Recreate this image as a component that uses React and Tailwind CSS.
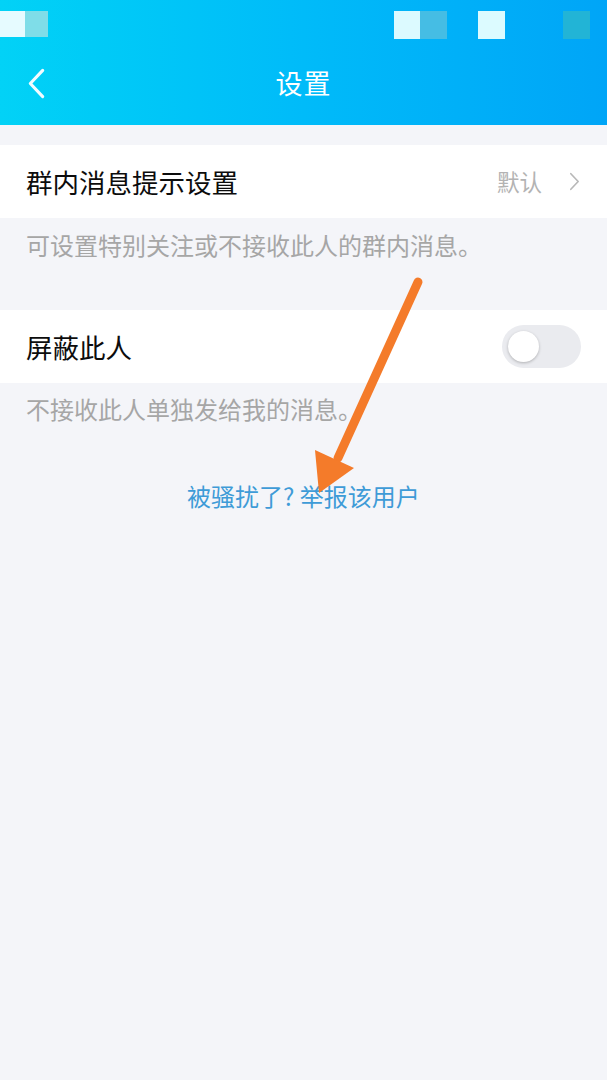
import React from 'react';

const cjk = { fontFamily: '"Noto Sans CJK SC", "Noto Sans", sans-serif' };

function Chevron({ className, stroke = '#fff', width = 2.5 }) {
  return (
    <svg viewBox="0 0 12 20" className={className} fill="none">
      <path d="M10 1.5 L2 10 L10 18.5" stroke={stroke} strokeWidth={width} strokeLinecap="round" strokeLinejoin="round" />
    </svg>
  );
}

// orange annotation arrow drawn over the page
function Arrow() {
  return (
    <svg className="absolute left-0 top-0 pointer-events-none" width="607" height="1080" viewBox="0 0 607 1080">
      <line x1="418" y1="282" x2="338" y2="458" stroke="#f47b2a" strokeWidth="9" strokeLinecap="round" />
      <polygon points="315,450 354,468 319,493" fill="#f47b2a" />
    </svg>
  );
}

export default function App() {
  return (
    <div className="relative w-[607px] h-[1080px] bg-[#f4f5f9] overflow-hidden" style={cjk}>
      {/* header */}
      <div className="h-[125px] bg-gradient-to-r from-[#02d2f6] via-[#00bbf9] to-[#00a5f7] flex flex-col">
        <div className="h-[50px] flex items-start pt-[11px]">
          <div className="w-[25px] h-[26px] bg-[#e6fbff]" />
          <div className="w-[23px] h-[26px] bg-[#7fdde8]" />
          <div className="flex-1" />
          <div className="w-[26px] h-[28px] bg-[#dcfaff]" />
          <div className="w-[27px] h-[28px] bg-[#45bde4]" />
          <div className="w-[31px]" />
          <div className="w-[27px] h-[28px] bg-[#dcfbff]" />
          <div className="w-[58px]" />
          <div className="w-[27px] h-[28px] bg-[#22b4d6]" />
          <div className="w-[17px]" />
        </div>
        <div className="flex-1 relative flex items-center justify-center pb-[8px]">
          <Chevron className="absolute left-[27px] top-[18px] w-[19px] h-[31px]" stroke="#f3fbff" width={2} />
          <span className="text-white text-[27px] tracking-[1px]">设置</span>
        </div>
      </div>

      <div className="h-[20px]" />

      <div className="h-[73px] bg-white flex items-center pl-[26px] pr-[27px]">
        <span className="text-[26.5px] text-[#0c0c0c]">群内消息提示设置</span>
        <span className="ml-auto text-[22.5px] text-[#b3b3b3]">默认</span>
        <Chevron className="ml-[27px] w-[11px] h-[19px] rotate-180" stroke="#b8b8b8" width={1.8} />
      </div>
      <div className="h-[92px] pl-[26px] pt-[9px] text-[24px] text-[#a6a6a6]">可设置特别关注或不接收此人的群内消息。</div>

      <div className="h-[73px] bg-white flex items-center pl-[26px] pr-[26px]">
        <span className="text-[26.5px] text-[#0c0c0c]">屏蔽此人</span>
        <div className="ml-auto w-[79px] h-[43px] rounded-full bg-[#eaebef] flex items-center pl-[6px]">
          <div className="w-[31px] h-[31px] rounded-full bg-white shadow-[0_1px_3px_rgba(0,0,0,0.25)]" />
        </div>
      </div>
      <div className="pl-[26px] pt-[8px] text-[24px] text-[#a6a6a6]">不接收此人单独发给我的消息。</div>

      <div className="mt-[51px] text-center text-[24px] text-[#3e9bd7]">被骚扰了? 举报该用户</div>

      <Arrow />
    </div>
  );
}
